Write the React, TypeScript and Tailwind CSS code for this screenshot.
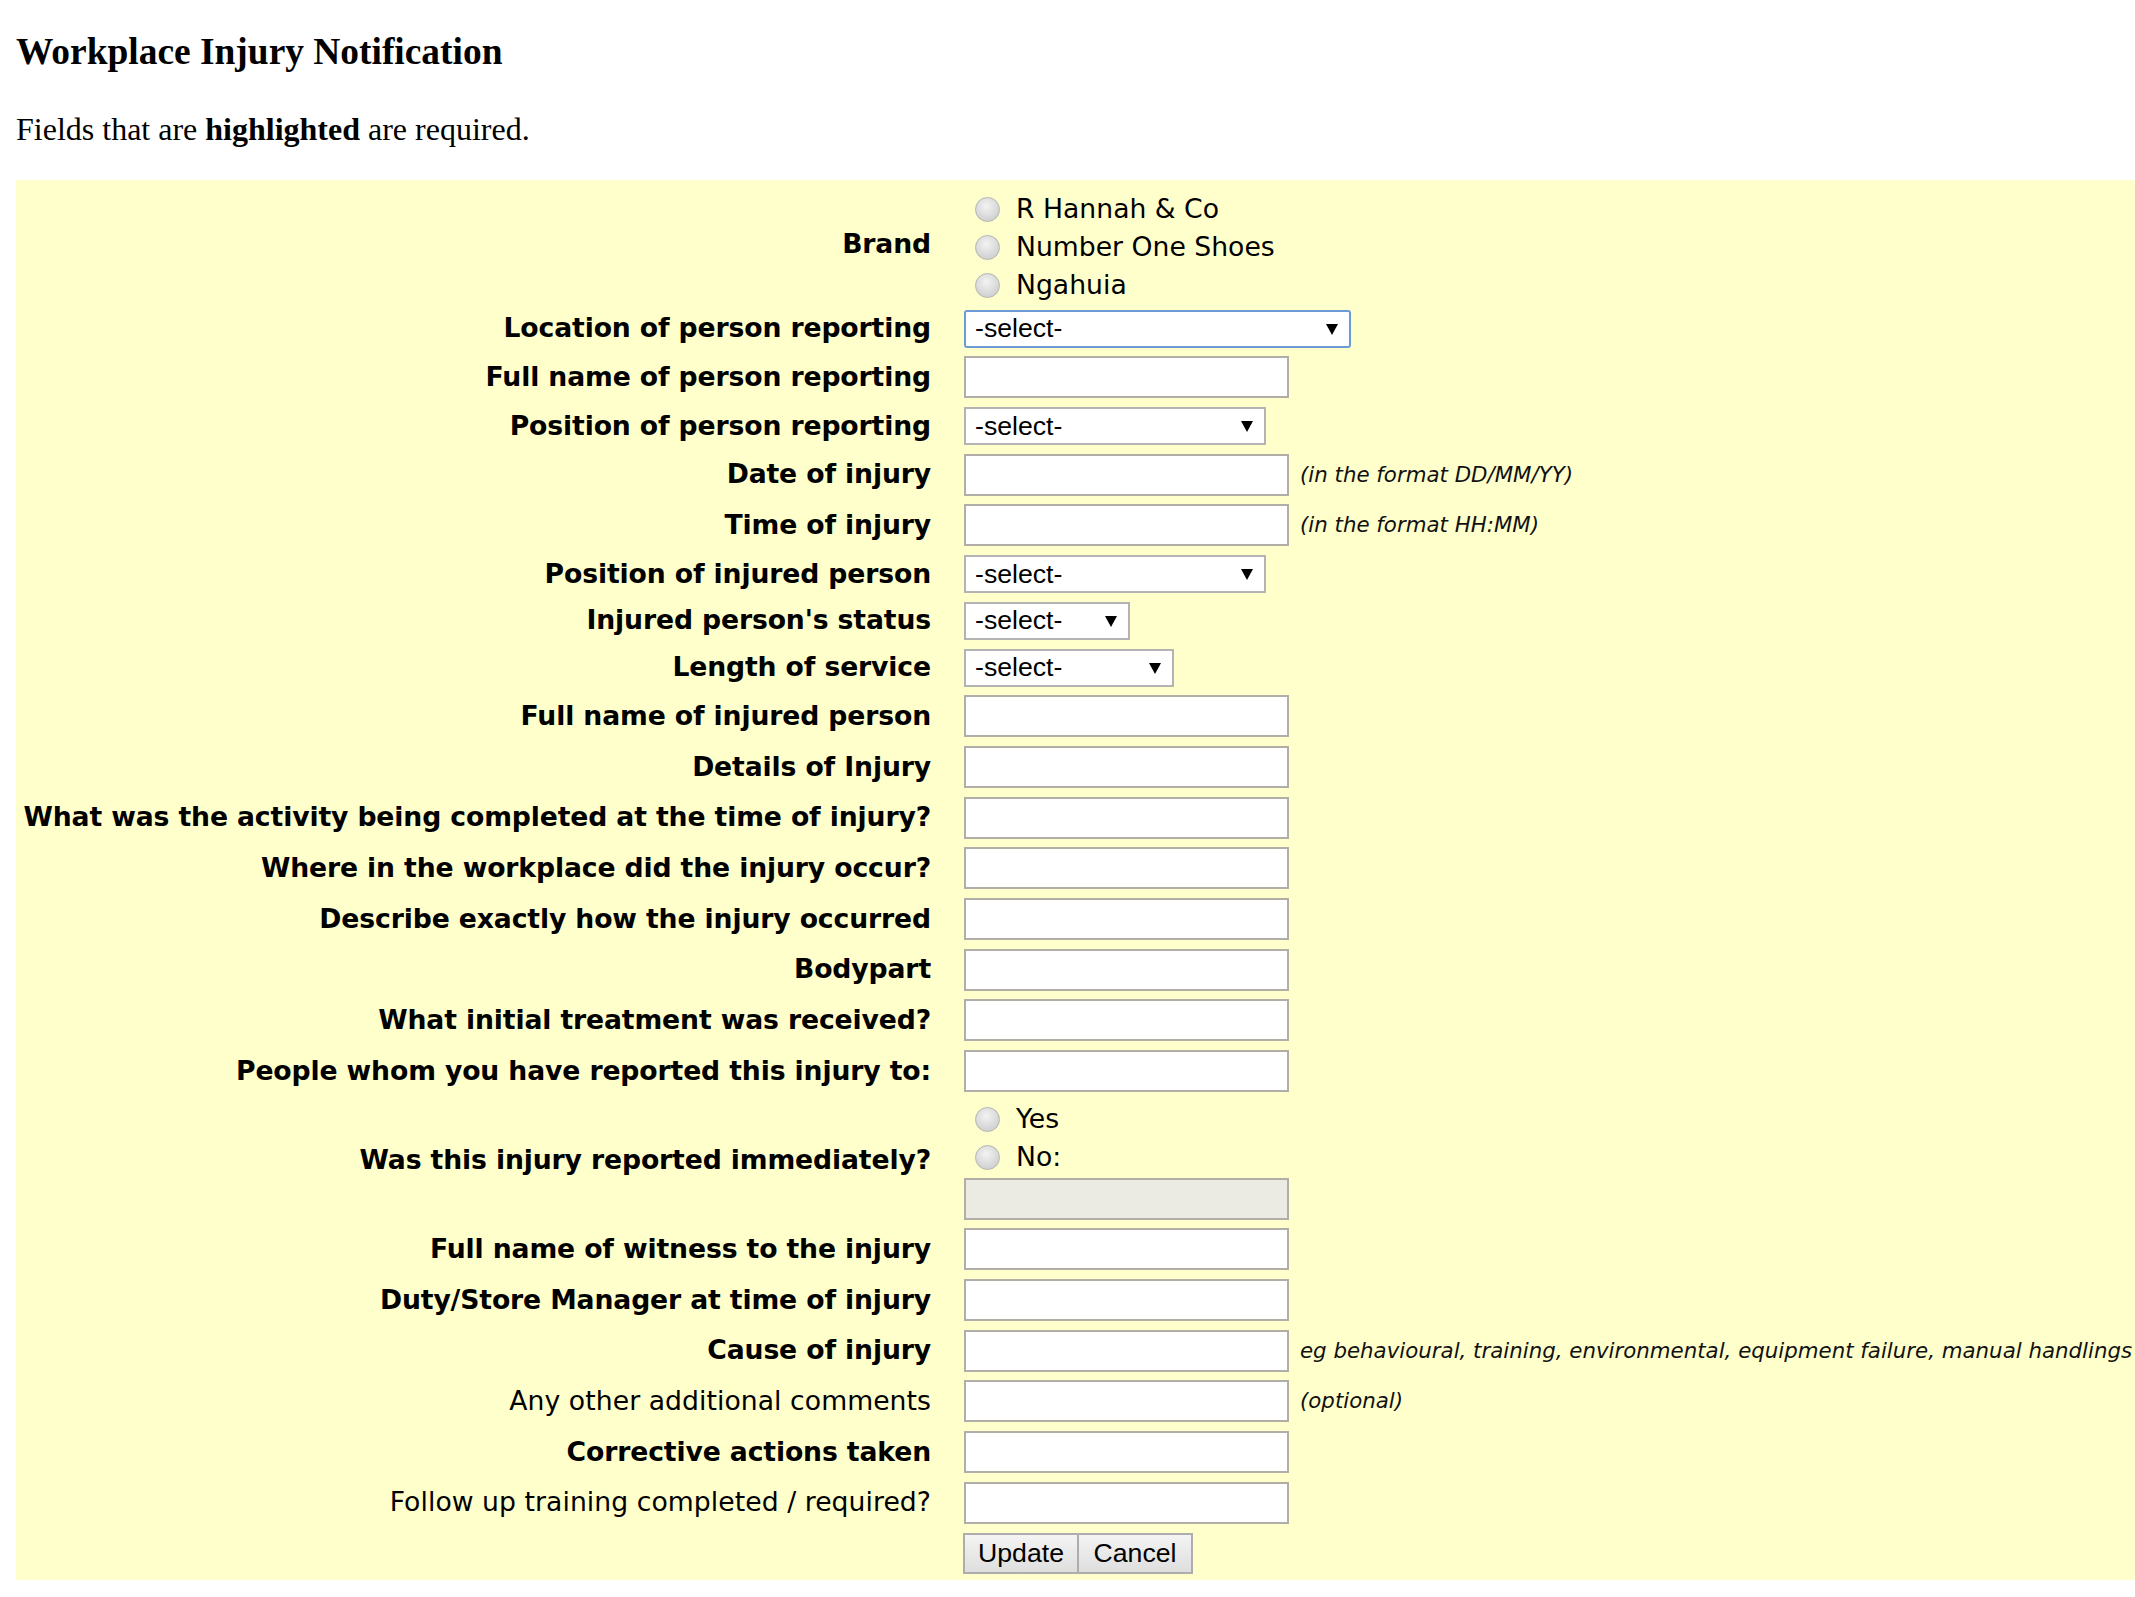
import React from 'react'

type Row =
  | { label: string; bold?: boolean; kind: 'text'; hint?: string }
  | { label: string; bold?: boolean; kind: 'select'; width: string; focused?: boolean }
  | { label: string; bold?: boolean; kind: 'radio'; options: string[]; extra?: boolean }
  | { label: string; bold?: boolean; kind: 'buttons' }

const ROWS: Row[] = [
  { label: 'Brand', bold: true, kind: 'radio', options: ['R Hannah & Co', 'Number One Shoes', 'Ngahuia'] },
  { label: 'Location of person reporting', bold: true, kind: 'select', width: 'w-[387px]', focused: true },
  { label: 'Full name of person reporting', bold: true, kind: 'text' },
  { label: 'Position of person reporting', bold: true, kind: 'select', width: 'w-[302px]' },
  { label: 'Date of injury', bold: true, kind: 'text', hint: '(in the format DD/MM/YY)' },
  { label: 'Time of injury', bold: true, kind: 'text', hint: '(in the format HH:MM)' },
  { label: 'Position of injured person', bold: true, kind: 'select', width: 'w-[302px]' },
  { label: "Injured person's status", bold: true, kind: 'select', width: 'w-[166px]' },
  { label: 'Length of service', bold: true, kind: 'select', width: 'w-[210px]' },
  { label: 'Full name of injured person', bold: true, kind: 'text' },
  { label: 'Details of Injury', bold: true, kind: 'text' },
  { label: 'What was the activity being completed at the time of injury?', bold: true, kind: 'text' },
  { label: 'Where in the workplace did the injury occur?', bold: true, kind: 'text' },
  { label: 'Describe exactly how the injury occurred', bold: true, kind: 'text' },
  { label: 'Bodypart', bold: true, kind: 'text' },
  { label: 'What initial treatment was received?', bold: true, kind: 'text' },
  { label: 'People whom you have reported this injury to:', bold: true, kind: 'text' },
  { label: 'Was this injury reported immediately?', bold: true, kind: 'radio', options: ['Yes', 'No:'], extra: true },
  { label: 'Full name of witness to the injury', bold: true, kind: 'text' },
  { label: 'Duty/Store Manager at time of injury', bold: true, kind: 'text' },
  {
    label: 'Cause of injury',
    bold: true,
    kind: 'text',
    hint: 'eg behavioural, training, environmental, equipment failure, manual handlings',
  },
  { label: 'Any other additional comments', kind: 'text', hint: '(optional)' },
  { label: 'Corrective actions taken', bold: true, kind: 'text' },
  { label: 'Follow up training completed / required?', kind: 'text' },
  { label: '', kind: 'buttons' },
]

function TextBox({ disabled }: { disabled?: boolean }) {
  return (
    <div
      className={`h-[42px] w-[325px] border-2 border-[#b0aea6] ${disabled ? 'bg-[#ebebe4]' : 'bg-white'}`}
    />
  )
}

function SelectBox({ width, focused }: { width: string; focused?: boolean }) {
  return (
    <div
      className={`flex h-[38px] ${width} items-center justify-between bg-white pl-[9px] pr-[11px] font-['Liberation_Sans',Arial,sans-serif] text-[26.67px] leading-none text-black ${
        focused ? 'rounded-[3px] border-2 border-[#6b9ad6]' : 'border-2 border-[#b3b3b3]'
      }`}
    >
      <span>-select-</span>
      <svg width="12" height="12" viewBox="0 0 12 12">
        <polygon points="0,1 12,1 6,12" fill="#000" />
      </svg>
    </div>
  )
}

function Radio({ label }: { label: string }) {
  return (
    <div className="flex h-[38px] items-center">
      <span className="ml-[11px] h-[25px] w-[25px] rounded-full border border-[#b4b4b4] bg-[radial-gradient(circle_at_45%_35%,#f3f3f3,#d3d3d3_70%)]" />
      <span className="ml-[16px] text-[26.67px] leading-none text-black">{label}</span>
    </div>
  )
}

function Field({ row, first }: { row: Row; first?: boolean }) {
  if (row.kind === 'text') {
    return (
      <div className="flex items-center">
        <TextBox />
        {row.hint && (
          <span className="ml-[11px] whitespace-nowrap text-[21.33px] italic text-[#111]">{row.hint}</span>
        )}
      </div>
    )
  }
  if (row.kind === 'select') return <SelectBox width={row.width} focused={row.focused} />
  if (row.kind === 'radio') {
    return (
      <div className={`flex flex-col ${first ? 'mb-[-3px] mt-[3px]' : ''}`}>
        {row.options.map(o => (
          <Radio key={o} label={o} />
        ))}
        {row.extra && (
          <div className="mt-[1px]">
            <TextBox disabled />
          </div>
        )}
      </div>
    )
  }
  return (
    <div className="ml-[-1px] flex font-['Liberation_Sans',Arial,sans-serif] text-[26.67px] text-black">
      <div className="flex h-[41px] w-[116px] items-center justify-center border-2 border-[#adadad] bg-[linear-gradient(#f4f4f4,#dedede)]">
        Update
      </div>
      <div className="ml-[-2px] flex h-[41px] w-[116px] items-center justify-center border-2 border-[#adadad] bg-[linear-gradient(#f4f4f4,#dedede)]">
        Cancel
      </div>
    </div>
  )
}

export default function App() {
  return (
    <div className="min-h-screen w-full overflow-hidden bg-white pl-[16px] pt-[31px] text-black">
      <h3 className="font-['Liberation_Serif','Times_New_Roman',serif] text-[37.44px] font-bold leading-[41px]">
        Workplace Injury Notification
      </h3>
      <p className="mt-[40px] font-['Liberation_Serif','Times_New_Roman',serif] text-[32px] leading-[35px]">
        Fields that are <b>highlighted</b> are required.
      </p>

      <div className="mt-[33px] bg-[#ffffcc] pb-[6px] pt-[7px] font-['DejaVu_Sans',Verdana,sans-serif]">
        <div className="grid grid-cols-[915px_auto] gap-x-[33px] gap-y-[8.7px]">
          {ROWS.map((row, i) => (
            <React.Fragment key={i}>
              <div
                className={`flex items-center justify-end whitespace-nowrap text-right text-[26.67px] leading-none ${
                  row.bold ? 'font-bold tracking-[-0.13px]' : 'font-normal tracking-[0.05px]'
                }`}
              >
                {row.label}
              </div>
              <Field row={row} first={i === 0} />
            </React.Fragment>
          ))}
        </div>
      </div>
    </div>
  )
}
